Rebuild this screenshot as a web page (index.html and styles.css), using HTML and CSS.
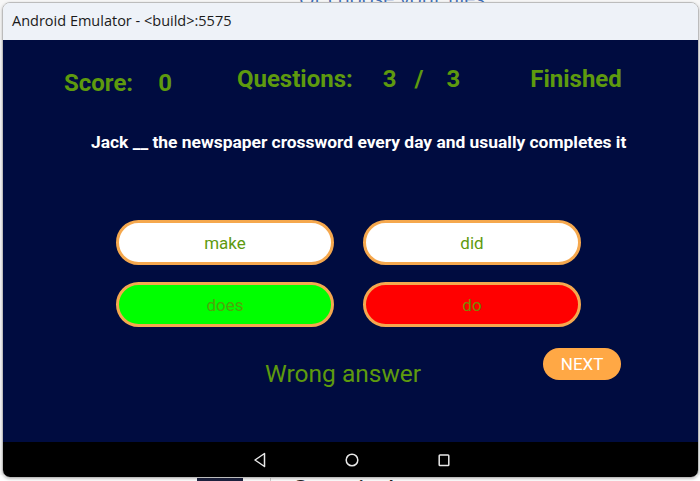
FILE: index.html
```html
<!DOCTYPE html>
<html>
<head>
<meta charset="utf-8">
<link rel="stylesheet" href="styles.css">
</head>
<body>
<div class="desktop">
  <div class="bg-top">Or choose your files</div>
  <div class="bg-bottom"><span class="bg-icon"></span><span class="bg-line"></span><span class="bg-text">Commit changes</span></div>
  <div class="window">
    <div class="titlebar">Android Emulator - &lt;build&gt;:5575</div>
    <div class="screen">
      <div class="header">
        <div class="score"><span>Score:</span><span class="score-val">0</span></div>
        <div class="questions"><span>Questions:</span><span class="q-num">3</span><span class="q-slash">/</span><span class="q-tot">3</span></div>
        <div class="finished">Finished</div>
      </div>
      <div class="question">Jack __ the newspaper crossword every day and usually completes it</div>
      <div class="answers">
        <div class="answer">make</div>
        <div class="answer">did</div>
        <div class="answer correct">does</div>
        <div class="answer wrong">do</div>
      </div>
      <div class="footer">
        <div class="result">Wrong answer</div>
        <div class="next">NEXT</div>
      </div>
    </div>
    <div class="navbar">
      <svg class="nav-icon" width="14" height="16" viewBox="0 0 14 16"><path d="M11.5 1.5 L2 8 L11.5 14.5 Z" fill="none" stroke="#e8e8e8" stroke-width="1.5" stroke-linejoin="round"/></svg>
      <svg class="nav-icon" width="16" height="16" viewBox="0 0 16 16"><circle cx="8" cy="8" r="5.8" fill="none" stroke="#e8e8e8" stroke-width="1.5"/></svg>
      <svg class="nav-icon" width="14" height="16" viewBox="0 0 14 16"><rect x="2.2" y="3" width="9.6" height="10.5" rx="0.8" fill="none" stroke="#e8e8e8" stroke-width="1.5"/></svg>
    </div>
  </div>
</div>
</body>
</html>
```

FILE: styles.css
```css
* { box-sizing: border-box; }
html, body { margin: 0; padding: 0; }
body {
  width: 700px;
  height: 481px;
  overflow: hidden;
  background: #f7f7f7;
  font-family: Roboto, "Noto Sans", sans-serif;
}
.desktop {
  position: relative;
  width: 700px;
  height: 481px;
  overflow: hidden;
}
.bg-top {
  position: absolute;
  top: -15px;
  left: 299px;
  font-family: "Open Sans", sans-serif;
  font-size: 20px;
  color: #3f6fb8;
}
.bg-bottom {
  position: absolute;
  top: 475px;
  left: 0;
  width: 700px;
  height: 10px;
  background: #ffffff;
}
.bg-icon {
  position: absolute;
  left: 197px;
  top: 2px;
  width: 46px;
  height: 10px;
  background: #1d2240;
}
.bg-line {
  position: absolute;
  left: 270px;
  top: 0;
  width: 1px;
  height: 10px;
  background: #d0d0d0;
}
.bg-text {
  position: absolute;
  left: 292px;
  top: -1px;
  font-family: "Open Sans", sans-serif;
  font-size: 21px;
  font-weight: 600;
  color: #222;
}
.window {
  position: absolute;
  left: 2px;
  top: 2px;
  width: 697px;
  height: 476px;
  border: 1px solid #bcbcbc;
  border-radius: 8px;
  overflow: hidden;
  display: flex;
  flex-direction: column;
  box-shadow: 0 1px 3px rgba(0,0,0,0.25);
}
.titlebar {
  height: 37px;
  flex: none;
  background: #eef2f8;
  color: #1a1a1a;
  font-family: "Open Sans", sans-serif;
  font-size: 14.5px;
  padding: 8px 0 0 9px;
}
.screen {
  flex: 1;
  background: #000c40;
  display: flex;
  flex-direction: column;
}
.header {
  display: flex;
  align-items: flex-start;
  padding: 25px 0 0 61px;
  color: #5e9a0e;
  font-size: 24px;
  font-weight: 700;
  line-height: 28px;
  height: 92px;
}
.score {
  display: flex;
  gap: 25px;
  margin-top: 4px;
}
.questions {
  display: flex;
  margin-left: 65px;
}
.q-num { margin-left: 30px; }
.q-slash { margin-left: 18px; }
.q-tot { margin-left: 23px; }
.finished { margin-left: 70px; }
.question {
  color: #ffffff;
  font-weight: 700;
  font-size: 17.4px;
  line-height: 20px;
  padding-left: 88px;
  height: 20px;
}
.answers {
  display: grid;
  grid-template-columns: 218px 218px;
  column-gap: 29px;
  row-gap: 17px;
  margin: 68px 0 0 113px;
}
.answer {
  height: 45px;
  border: 3px solid #f5a84e;
  border-radius: 23px;
  background: #ffffff;
  color: #5e9a0e;
  font-size: 17px;
  display: flex;
  align-items: center;
  justify-content: center;
}
.answer.correct { background: #00ff00; color: #4fa60a; }
.answer.wrong { background: #ff0000; color: #7a8a00; }
.footer {
  display: flex;
  align-items: flex-start;
  margin-top: 21px;
}
.result {
  margin: 12px 0 0 262px;
  color: #5e9a0e;
  font-size: 24.5px;
  line-height: 28px;
}
.next {
  margin-left: 122px;
  width: 78px;
  height: 32px;
  border-radius: 16px;
  background: #ffa845;
  color: #ffffff;
  font-size: 17px;
  display: flex;
  align-items: center;
  justify-content: center;
}
.navbar {
  height: 35px;
  flex: none;
  background: #000000;
  display: flex;
  align-items: center;
  justify-content: center;
  gap: 77px;
  padding-left: 2px;
}
.nav-icon { display: block; }
```
